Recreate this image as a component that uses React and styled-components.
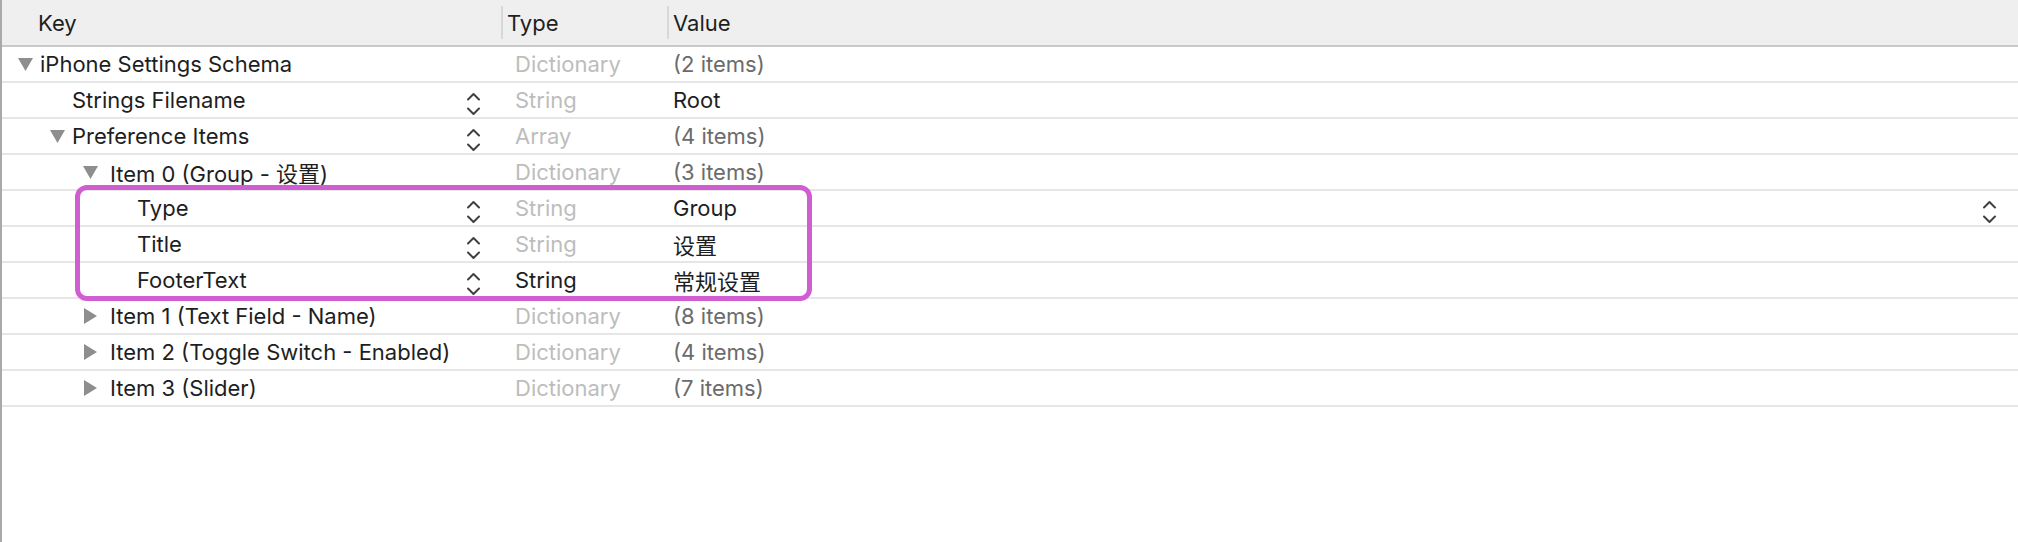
import styled, { createGlobalStyle } from 'styled-components';

const GlobalStyle = createGlobalStyle`
   html, body {
      margin: 0;
      padding: 0;
      background: #fff;
   }
   body {
      font-family: Inter, 'Noto Sans CJK SC', sans-serif;
      -webkit-font-smoothing: antialiased;
   }
`;

// triangle left edge / text left edge, per tree level (page px)
const TRI_X = [18, 50, 83];
const TEXT_X = [40, 72, 110, 137];

const rows = [
   { level: 0, open: true, key: 'iPhone Settings Schema', type: 'Dictionary', value: '(2 items)', count: true },
   { level: 1, key: 'Strings Filename', stepper: true, type: 'String', value: 'Root' },
   { level: 1, open: true, key: 'Preference Items', stepper: true, type: 'Array', value: '(4 items)', count: true },
   { level: 2, open: true, key: 'Item 0 (Group - 设置)', type: 'Dictionary', value: '(3 items)', count: true },
   { level: 3, key: 'Type', stepper: true, type: 'String', value: 'Group', valueStepper: true },
   { level: 3, key: 'Title', stepper: true, type: 'String', value: '设置' },
   { level: 3, key: 'FooterText', stepper: true, type: 'String', typeDark: true, value: '常规设置' },
   { level: 2, open: false, key: 'Item 1 (Text Field - Name)', type: 'Dictionary', value: '(8 items)', count: true },
   { level: 2, open: false, key: 'Item 2 (Toggle Switch - Enabled)', type: 'Dictionary', value: '(4 items)', count: true },
   { level: 2, open: false, key: 'Item 3 (Slider)', type: 'Dictionary', value: '(7 items)', count: true },
];

const Stepper = () => (
   <StepperIcon width='15' height='24' viewBox='0 0 15 24'>
      <path d='M2 7.5l5.5-5.5L13 7.5' />
      <path d='M2 16.5l5.5 5.5L13 16.5' />
   </StepperIcon>
);

const Disclosure = ({ open }) =>
   open ? (
      <svg width='15' height='13' viewBox='0 0 15 13'>
         <path d='M0 0h15L7.5 13z' fill='#8e8e8e' />
      </svg>
   ) : (
      <svg width='13' height='16' viewBox='0 0 13 16'>
         <path d='M0 0l13 8L0 16z' fill='#8e8e8e' />
      </svg>
   );

const App = () => {
   return (
      <>
         <GlobalStyle />
         <Page>
            <HeaderRow>
               <HeaderCell $pad={36}>Key</HeaderCell>
               <HeaderCell>
                  <Sep />
                  Type
               </HeaderCell>
               <HeaderCell>
                  <Sep />
                  Value
               </HeaderCell>
            </HeaderRow>

            {rows.map((r, i) => {
               const hasToggle = r.open !== undefined;
               const indent = hasToggle ? TRI_X[r.level] - 2 : TEXT_X[r.level] - 2;
               const gap = hasToggle ? TEXT_X[r.level] - TRI_X[r.level] - 15 : 0;
               return (
                  <Row key={i}>
                     <KeyCell $indent={indent}>
                        {hasToggle && (
                           <Toggle $gap={gap}>
                              <Disclosure open={r.open} />
                           </Toggle>
                        )}
                        <Text>{r.key}</Text>
                        {r.stepper && <Stepper />}
                     </KeyCell>
                     <TypeCell>
                        <Text $tone={r.typeDark ? 'dark' : 'dim'}>{r.type}</Text>
                     </TypeCell>
                     <ValueCell>
                        <Text $tone={r.count ? 'mid' : 'dark'}>{r.value}</Text>
                        {r.valueStepper && <Stepper />}
                     </ValueCell>
                  </Row>
               );
            })}

            <Highlight />
         </Page>
      </>
   );
};

export default App;

const Page = styled.div`
   position: relative;
   box-sizing: border-box;
   width: 2018px;
   height: 542px;
   overflow: hidden;
   border-left: 2px solid #a9a9a9;
   background: #fff;
`;

const gridCols = `
   display: grid;
   grid-template-columns: 499px 166px 1fr;
`;

const HeaderRow = styled.div`
   ${gridCols}
   height: 45px;
   background: #efefef;
   border-bottom: 2px solid #c9c9c9;
`;

const HeaderCell = styled.div`
   display: flex;
   align-items: center;
   padding-left: ${(p) => p.$pad || 0}px;
   font-size: 22px;
   color: #1e1e1e;
`;

const Sep = styled.span`
   width: 2px;
   height: 33px;
   margin-right: 4px;
   background: #d8d8d8;
`;

const Row = styled.div`
   ${gridCols}
   height: 34px;
   border-bottom: 2px solid #e6e6e6;
`;

const KeyCell = styled.div`
   display: flex;
   align-items: center;
   padding-left: ${(p) => p.$indent}px;
   padding-right: 20px;
   min-width: 0;
`;

const Toggle = styled.span`
   display: flex;
   align-items: center;
   justify-content: center;
   width: 15px;
   margin-right: ${(p) => p.$gap}px;
`;

const TypeCell = styled.div`
   display: flex;
   align-items: center;
   padding-left: 14px;
`;

const ValueCell = styled.div`
   display: flex;
   align-items: center;
   padding-left: 6px;
   padding-right: 21px;
`;

const tones = {
   dark: '#1e1e1e',
   mid: '#6b6b6b',
   dim: '#bdbdbd',
};

const Text = styled.span`
   font-size: 22px;
   white-space: nowrap;
   color: ${(p) => tones[p.$tone || 'dark']};
`;

const StepperIcon = styled.svg`
   margin-left: auto;
   align-self: flex-end;
   margin-bottom: 1px;
   fill: none;
   stroke: #404040;
   stroke-width: 2;
   stroke-linecap: round;
   stroke-linejoin: round;
`;

const Highlight = styled.div`
   position: absolute;
   left: 73px;
   top: 185px;
   width: 727px;
   height: 106px;
   border: 5px solid #d15ed1;
   border-radius: 12px;
   pointer-events: none;
`;
